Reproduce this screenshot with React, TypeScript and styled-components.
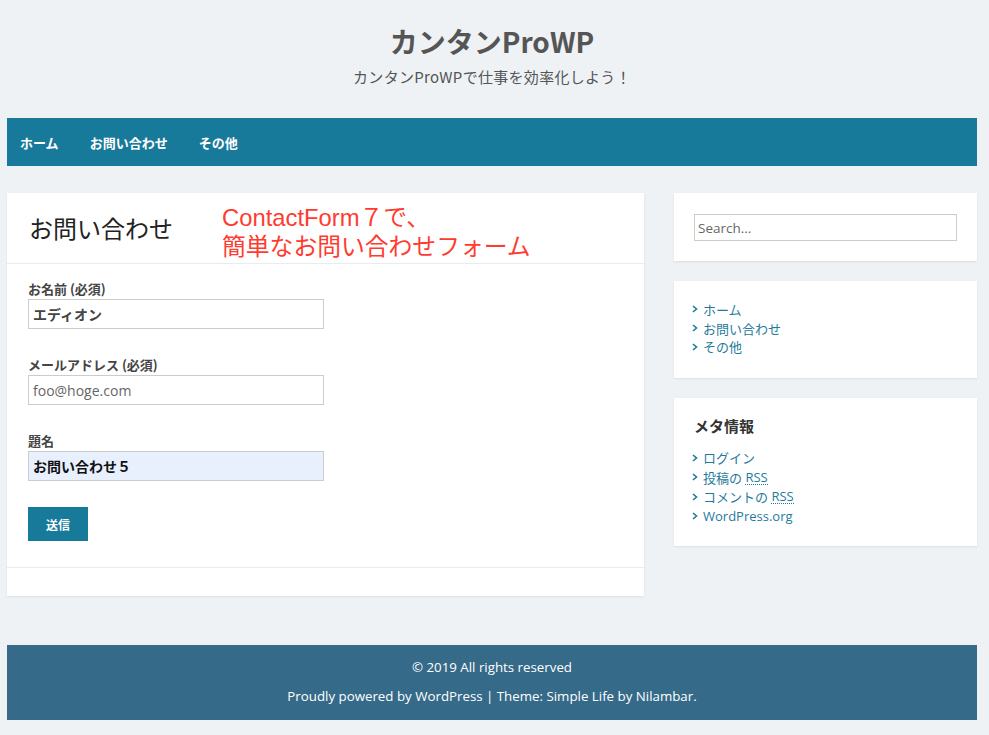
import React from "react";
import styled, { createGlobalStyle } from "styled-components";

const FONT = `"Open Sans", "Noto Sans CJK JP", sans-serif`;
const JP = `"Noto Sans CJK JP", "Open Sans", sans-serif`;
const BLUE = "#187a9b";
const LINK = "#1f7b9c";

const Global = createGlobalStyle`
  html, body { margin: 0; padding: 0; background: #eef2f5; }
  body { font-family: ${FONT}; color: #333; }
  * { box-sizing: border-box; }
`;

const Page = styled.div`
  width: 970px;
  margin-left: 7px;
  min-height: 735px;
`;

const Header = styled.header`
  padding: 21px 0 30px;
  text-align: center;
`;

const SiteTitle = styled.h1`
  margin: 0;
  font-family: ${JP};
  font-size: 28px;
  line-height: 40px;
  font-weight: 700;
  color: #555;
`;

const Tagline = styled.p`
  margin: 5px 0 0;
  font-family: ${JP};
  font-size: 15px;
  line-height: 22px;
  color: #555;
  letter-spacing: 0.3px;
`;

const Nav = styled.nav`
  height: 48px;
  background: ${BLUE};
  display: flex;
  align-items: center;
  gap: 31px;
  padding-left: 13px;
`;

const NavItem = styled.a`
  color: #fff;
  font-family: ${JP};
  font-size: 13px;
  font-weight: 700;
  text-decoration: none;
`;

const Main = styled.div`
  margin-top: 27px;
  display: flex;
  align-items: flex-start;
  gap: 30px;
`;

const Card = styled.article`
  width: 637px;
  background: #fff;
  box-shadow: 0 1px 2px rgba(0, 0, 0, 0.08);
`;

const CardHeader = styled.div`
  height: 71px;
  display: flex;
  align-items: center;
  padding: 0 22px;
  border-bottom: 1px solid #e9ecef;
`;

const CardTitle = styled.h2`
  margin: 0;
  font-family: ${JP};
  font-size: 24px;
  font-weight: 400;
  color: #222;
  line-height: 32px;
`;

const Note = styled.div`
  margin-left: 49px;
  margin-top: 8px;
  color: #ff3b30;
  font-family: "Liberation Sans", "Noto Sans CJK JP", sans-serif;
  font-size: 23.8px;
  line-height: 29px;
`;

const FormBody = styled.form`
  padding: 15px 21px 26px;
  border-bottom: 1px solid #e9ecef;
`;

const Field = styled.div`
  margin-bottom: 26px;
`;

const Label = styled.label`
  display: block;
  font-family: ${JP};
  font-size: 13px;
  line-height: 20px;
  font-weight: 700;
  color: #444;
`;

const Input = styled.div<{ $filled?: boolean; $muted?: boolean; $bold?: boolean }>`
  width: 296px;
  height: 30px;
  border: 1px solid #ccc;
  background: ${(p) => (p.$filled ? "#e8f0fe" : "#fff")};
  display: flex;
  align-items: center;
  padding-left: 4px;
  font-family: ${(p) => (p.$muted ? FONT : JP)};
  font-size: 14px;
  font-weight: ${(p) => (p.$bold ? 700 : 400)};
  color: ${(p) => (p.$muted ? "#666" : p.$filled ? "#111" : "#444")};
`;

const Submit = styled.button`
  display: block;
  width: 60px;
  height: 34px;
  border: none;
  background: ${BLUE};
  color: #fff;
  font-family: ${JP};
  font-size: 12px;
  font-weight: 700;
  padding: 0;
`;

const CardFooter = styled.div`
  height: 28px;
`;

const Sidebar = styled.aside`
  width: 303px;
  display: flex;
  flex-direction: column;
  gap: 20px;
`;

const Widget = styled.section<{ $top?: number; $bottom?: number }>`
  background: #fff;
  box-shadow: 0 1px 2px rgba(0, 0, 0, 0.08);
  padding: ${(p) => p.$top ?? 20}px 20px ${(p) => p.$bottom ?? 20}px;
`;

const SearchBox = styled.div`
  height: 27px;
  border: 1px solid #ccc;
  display: flex;
  align-items: center;
  padding-left: 3px;
  font-family: ${FONT};
  font-size: 13.5px;
  color: #666;
`;

const WidgetTitle = styled.h3`
  margin: 0 0 12px;
  font-family: ${JP};
  font-size: 15px;
  line-height: 20px;
  font-weight: 700;
  color: #333;
`;

const LinkList = styled.ul<{ $row: number }>`
  list-style: none;
  margin: 0;
  padding: 0;
  display: grid;
  grid-auto-rows: ${(p) => p.$row}px;
`;

const LinkItem = styled.li`
  display: flex;
  align-items: center;
  font-family: ${FONT};
  font-size: 13px;
  color: ${LINK};
  margin-left: -2px;
`;

const Chevron = styled.svg`
  width: 6px;
  height: 8px;
  margin-right: 5px;
  flex: none;
`;

const Abbr = styled.span`
  border-bottom: 1px dotted ${LINK};
  line-height: 14px;
`;

const Footer = styled.footer`
  margin-top: 49px;
  background: #356a89;
  padding: 12px 0 14px;
  text-align: center;
  color: #fff;
  font-family: ${FONT};
  font-size: 13.3px;
  line-height: 20px;
`;

const FooterLine = styled.p<{ $gap?: number }>`
  margin: ${(p) => p.$gap ?? 0}px 0 0;
`;

const Arrow = () => (
  <Chevron viewBox="0 0 6 8">
    <path d="M1 1 L4.5 4 L1 7" fill="none" stroke={LINK} strokeWidth="1.6" />
  </Chevron>
);

export default function App() {
  return (
    <>
      <Global />
      <Page>
        <Header>
          <SiteTitle>カンタンProWP</SiteTitle>
          <Tagline>カンタンProWPで仕事を効率化しよう！</Tagline>
        </Header>
        <Nav>
          <NavItem>ホーム</NavItem>
          <NavItem>お問い合わせ</NavItem>
          <NavItem>その他</NavItem>
        </Nav>
        <Main>
          <Card>
            <CardHeader>
              <CardTitle>お問い合わせ</CardTitle>
              <Note>
                ContactForm７で、
                <br />
                簡単なお問い合わせフォーム
              </Note>
            </CardHeader>
            <FormBody>
              <Field>
                <Label>お名前 (必須)</Label>
                <Input $bold>エディオン</Input>
              </Field>
              <Field>
                <Label>メールアドレス (必須)</Label>
                <Input $muted>foo@hoge.com</Input>
              </Field>
              <Field>
                <Label>題名</Label>
                <Input $filled $bold>お問い合わせ５</Input>
              </Field>
              <Submit type="button">送信</Submit>
            </FormBody>
            <CardFooter />
          </Card>
          <Sidebar>
            <Widget $top={21}>
              <SearchBox>Search...</SearchBox>
            </Widget>
            <Widget $top={19} $bottom={22}>
              <LinkList $row={18.7}>
                <LinkItem><Arrow />ホーム</LinkItem>
                <LinkItem><Arrow />お問い合わせ</LinkItem>
                <LinkItem><Arrow />その他</LinkItem>
              </LinkList>
            </Widget>
            <Widget $top={18} $bottom={20}>
              <WidgetTitle>メタ情報</WidgetTitle>
              <LinkList $row={19.4}>
                <LinkItem><Arrow />ログイン</LinkItem>
                <LinkItem><Arrow />投稿の&nbsp;<Abbr>RSS</Abbr></LinkItem>
                <LinkItem><Arrow />コメントの&nbsp;<Abbr>RSS</Abbr></LinkItem>
                <LinkItem><Arrow />WordPress.org</LinkItem>
              </LinkList>
            </Widget>
          </Sidebar>
        </Main>
        <Footer>
          <FooterLine>© 2019 All rights reserved</FooterLine>
          <FooterLine $gap={9}>Proudly powered by WordPress | Theme: Simple Life by Nilambar.</FooterLine>
        </Footer>
      </Page>
    </>
  );
}
